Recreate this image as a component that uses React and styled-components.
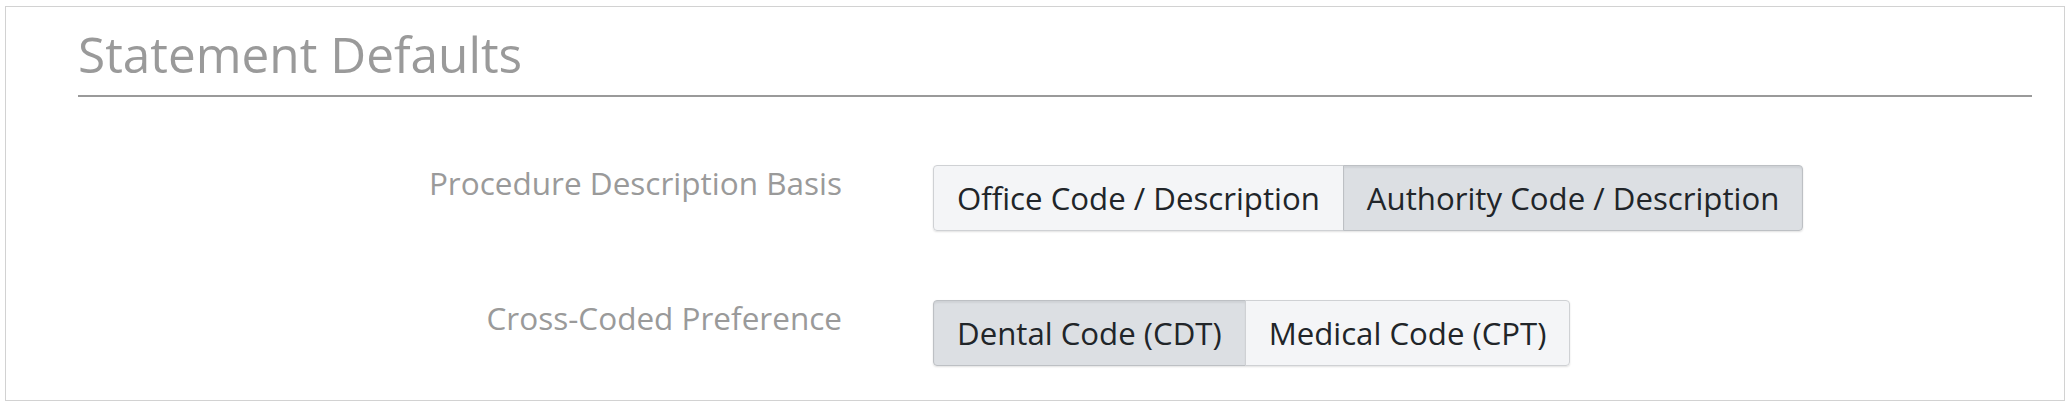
import React, { useState } from "react"
import styled, { createGlobalStyle } from "styled-components"

const GlobalStyle = createGlobalStyle`
  html, body {
    margin: 0;
    padding: 0;
    background: #fff;
  }
  body {
    font-family: "Open Sans", "Liberation Sans", sans-serif;
    color: #212529;
  }
`

const descriptionOptions = ["Office Code / Description", "Authority Code / Description"]
const codeOptions = ["Dental Code (CDT)", "Medical Code (CPT)"]

export default function App() {
  const [basis, setBasis] = useState(1)
  const [code, setCode] = useState(0)

  return (
    <>
      <GlobalStyle />
      <Panel>
        <Title>Statement Defaults</Title>
        <Rule />
        <Form>
          <Row>
            <Label>Procedure Description Basis</Label>
            <Group>
              {descriptionOptions.map((opt, i) => (
                <Toggle key={opt} $active={basis === i} onClick={() => setBasis(i)}>
                  {opt}
                </Toggle>
              ))}
            </Group>
          </Row>
          <Row>
            <Label>Cross-Coded Preference</Label>
            <Group>
              {codeOptions.map((opt, i) => (
                <Toggle key={opt} $active={code === i} onClick={() => setCode(i)}>
                  {opt}
                </Toggle>
              ))}
            </Group>
          </Row>
        </Form>
      </Panel>
    </>
  )
}

const Panel = styled.section`
  margin: 6px 4px 0 5px;
  height: 395px;
  box-sizing: border-box;
  border: 1px solid #d2d2d2;
  padding: 17px 32px 0 72px;
`

const Title = styled.h2`
  margin: 0;
  font-size: 49.5px;
  font-weight: 400;
  line-height: 60px;
  color: #9a9a9a;
`

const Rule = styled.hr`
  margin: 11px 0 0;
  border: 0;
  height: 2px;
  background: #9a9a9a;
`

const Form = styled.div`
  display: flex;
  flex-direction: column;
  gap: 62px;
  margin-top: 61px;
`

const Row = styled.div`
  display: flex;
  align-items: flex-start;
`

const Label = styled.label`
  width: 764px;
  flex-shrink: 0;
  padding-top: 2px;
  text-align: right;
  font-size: 31.5px;
  line-height: 46px;
  color: #9a9a9a;
`

const Group = styled.div`
  display: flex;
  margin: 7px 0 0 91px;
  border-radius: 4px;
  box-shadow: 0 1px 2px rgba(0, 0, 0, 0.12);
`

const Toggle = styled.button`
  font-family: "Open Sans", "Liberation Sans", sans-serif;
  font-size: 31.2px;
  line-height: 46px;
  padding: 9px 23px;
  color: #212529;
  cursor: pointer;
  background: ${(p) => (p.$active ? "#dcdfe3" : "#f4f5f7")};
  border: 1px solid ${(p) => (p.$active ? "#bdc0c4" : "#cfd1d4")};
  box-shadow: ${(p) => (p.$active ? "inset 0 2px 2px rgba(0, 0, 0, 0.06)" : "none")};
  margin-left: -1px;

  &:first-child {
    margin-left: 0;
    border-radius: 4px 0 0 4px;
  }
  &:last-child {
    border-radius: 0 4px 4px 0;
  }
`
